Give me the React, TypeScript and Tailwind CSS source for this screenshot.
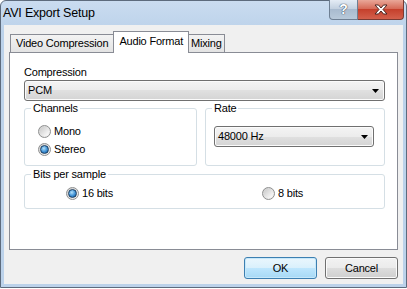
import React from 'react';

function Radio({ checked = false }: { checked?: boolean }) {
  return (
    <span className="w-[13px] h-[13px] shrink-0 rounded-full border border-[#8e8f8f] bg-[linear-gradient(135deg,#cfcfcf,#f6f6f6)] flex items-center justify-center">
      <span
        className={`w-[9px] h-[9px] rounded-full ${
          checked
            ? 'border border-[#1c3f62] bg-[radial-gradient(circle_at_40%_35%,#b4e2fb,#3c8fd4_55%,#0d4a86)]'
            : 'bg-[linear-gradient(135deg,#c9c9c9,#ffffff)]'
        }`}
      />
    </span>
  );
}

function RadioRow({ label, checked }: { label: string; checked?: boolean }) {
  return (
    <label className="h-[18px] flex items-center gap-[3px]">
      <Radio checked={checked} />
      <span>{label}</span>
    </label>
  );
}

function Combo({ value }: { value: string }) {
  return (
    <div className="h-[21px] flex items-center justify-between pl-[3px] pr-[5px] border border-[#707070] rounded-[3px] bg-[linear-gradient(#f4f4f4,#ececec_50%,#e0e0e0_50%,#d4d4d4)] shadow-[inset_0_0_0_1px_#fbfbfb]">
      <span>{value}</span>
      <svg width="7" height="4" viewBox="0 0 7 4">
        <path d="M0 0h7L3.5 4z" fill="#000" />
      </svg>
    </div>
  );
}

function Group({ title, className, children }: { title: string; className?: string; children: React.ReactNode }) {
  return (
    <fieldset className={`border border-[#d5dfe5] rounded-[3px] ${className ?? ''}`}>
      <legend className="ml-[6px] px-[2px] leading-[13px]">{title}</legend>
      {children}
    </fieldset>
  );
}

export default function App() {
  return (
    <div className="w-[407px] h-[289px] bg-white font-['Liberation_Sans',Arial,sans-serif] text-[11px] leading-[13px] text-black tracking-[-0.2px]">
      <div className="w-[407px] h-[288px] flex flex-col border border-[#5d6b7d] rounded-t-[6px] bg-[linear-gradient(#cadcf0,#bcd2ea_30px)]">
        {/* Title bar */}
        <div className="h-[24px] flex items-start justify-between">
          <span className="pl-[2px] pt-[5px] text-[12.5px] leading-[14px]">AVI Export Setup</span>
          <div className="flex -mt-[1px] mr-[2px]">
            <div className="w-[29px] h-[20px] flex items-center justify-center rounded-bl-[4px] border border-t-0 border-[#6e7f93] bg-[linear-gradient(#e4ecf5,#c3d1e0_45%,#a9bbcf_50%,#b8c9da)]">
              <span className="text-[14px] font-bold text-white [text-shadow:0_0_1px_#2b3a4c,0_0_1px_#2b3a4c]">?</span>
            </div>
            <div className="w-[46px] h-[20px] flex items-center justify-center rounded-br-[4px] border border-t-0 border-l-0 border-[#7a3a32] bg-[linear-gradient(#e9a798,#d66b58_45%,#c5402c_50%,#d3604c)]">
              <svg width="14" height="11" viewBox="0 0 14 11">
                <path d="M1 1h3.5L7 4l2.5-3H13L9 5.5 13 10H9.5L7 7l-2.5 3H1l4-4.5z" fill="#fff" stroke="#4a2420" strokeWidth="1" strokeLinejoin="round" />
              </svg>
            </div>
          </div>
        </div>

        {/* Client area */}
        <div className="flex-1 mx-[3px] mb-[3px] bg-[#f0f0f0] flex flex-col pl-[5px] pt-[6px]">
          {/* Tabs */}
          <div className="h-[21px] flex items-end pl-[1px]">
            <div className="h-[18px] px-[5px] flex items-center border border-b-0 border-[#898c95] bg-[linear-gradient(#f3f3f3,#e3e3e3)]">
              Video Compression
            </div>
            <div className="relative z-10 h-[22px] -mb-[1px] -ml-[1px] px-[5px] pb-[2px] flex items-center border border-b-0 border-[#898c95] bg-white">
              Audio Format
            </div>
            <div className="h-[18px] -ml-[1px] px-[2px] flex items-center border border-b-0 border-[#898c95] bg-[linear-gradient(#f3f3f3,#e3e3e3)]">
              Mixing
            </div>
          </div>

          {/* Panel */}
          <div className="w-[389px] h-[198px] border border-[#898c95] bg-white pl-[14px] pr-[12px] pt-[13px] flex flex-col">
            <span>Compression</span>
            <div className="mt-[1px]">
              <Combo value="PCM" />
            </div>

            <div className="flex gap-[8px] mt-[1px]">
              <Group title="Channels" className="w-[173px] h-[64px]">
                <div className="flex flex-col pl-[13px] pt-[7px]">
                  <RadioRow label="Mono" />
                  <RadioRow label="Stereo" checked />
                </div>
              </Group>
              <Group title="Rate" className="flex-1 h-[64px]">
                <div className="mt-[11px] ml-[8px] mr-[10px]">
                  <Combo value="48000 Hz" />
                </div>
              </Group>
            </div>

            <Group title="Bits per sample" className="mt-[2px] h-[41px]">
              <div className="flex pl-[41px] pt-[3px]">
                <div className="w-[196px]">
                  <RadioRow label="16 bits" checked />
                </div>
                <RadioRow label="8 bits" />
              </div>
            </Group>
          </div>

          {/* Buttons */}
          <div className="w-[389px] flex justify-end gap-[8px] mt-[7px]">
            <button className="w-[73px] h-[22px] flex items-center justify-center rounded-[3px] border border-[#3c7fb1] bg-[linear-gradient(#eaf6fd,#d9f0fc_50%,#bee6fd_50%,#a7d9f5)] shadow-[inset_0_0_0_1px_#c6e8fa]">
              OK
            </button>
            <button className="w-[73px] h-[22px] flex items-center justify-center rounded-[3px] border border-[#707070] bg-[linear-gradient(#f2f2f2,#ebebeb_50%,#dddddd_50%,#cfcfcf)] shadow-[inset_0_0_0_1px_#fbfbfb]">
              Cancel
            </button>
          </div>
        </div>
      </div>
    </div>
  );
}
